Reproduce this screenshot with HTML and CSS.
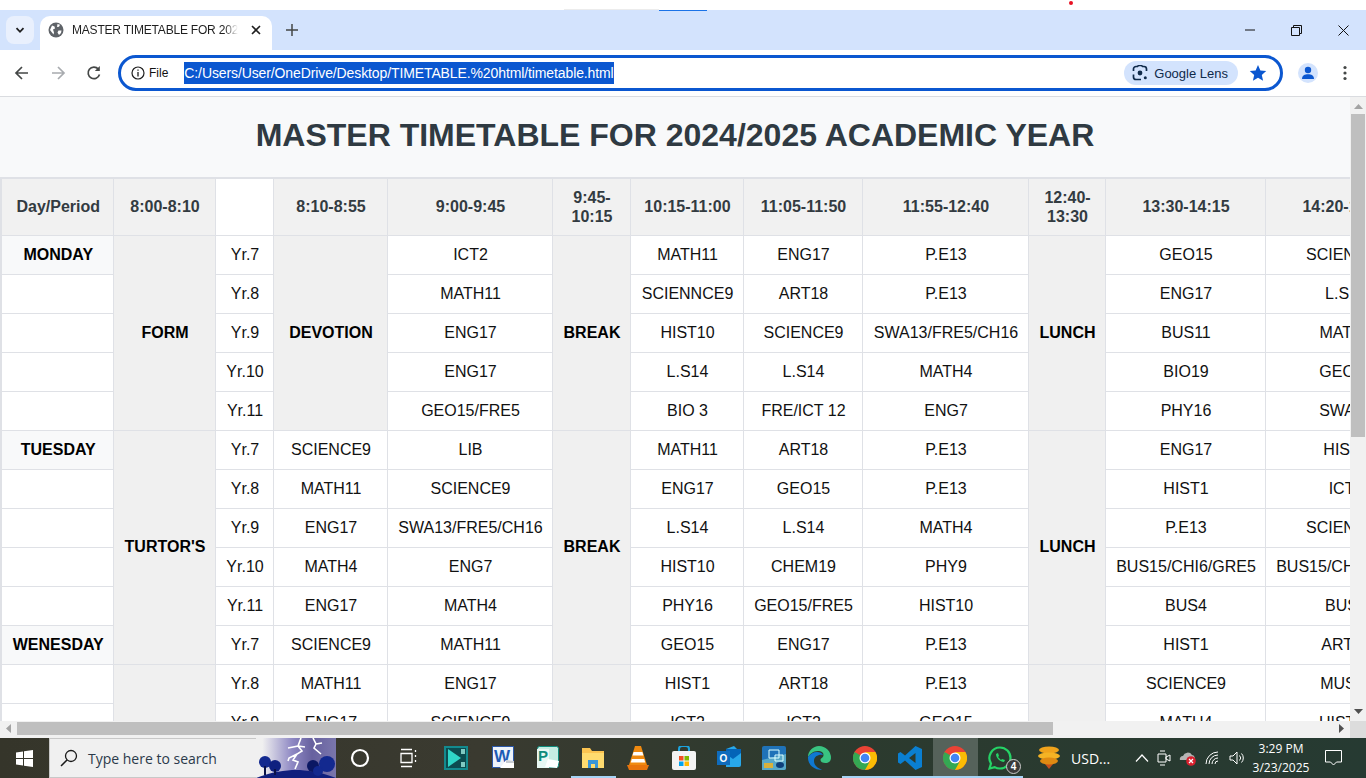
FILE: index.html
```html
<!DOCTYPE html>
<html lang="en">
<head>
<meta charset="utf-8">
<title>MASTER TIMETABLE FOR 2024/2025 ACADEMIC YEAR</title>
<link rel="stylesheet" href="styles.css">
</head>
<body>
<div class="app">
  <div class="topstrip"><span class="strip-grey"></span><span class="strip-blue"></span><span class="strip-dot"></span></div>

  <div class="tabbar">
    <button class="tab-search"><svg width="12" height="12" viewBox="0 0 12 12"><path d="M2.5 4.2 6 7.8l3.5-3.6" fill="none" stroke="#1f1f1f" stroke-width="1.8"/></svg></button>
    <div class="tab">
      <svg class="favicon" width="16" height="16" viewBox="0 0 16 16"><circle cx="8" cy="8" r="7.500" fill="#5f6368"/><path d="M4 3.500 6.500 4.500l.5 2-2 1 1 3-.5 2-3.500-4.500zM9.500 2l2.500.8-1 2-2 .2zM10.500 8.500h3l-.5 2.500-2 2-1.500-2.500z" fill="#fff"/></svg>
      <span class="tab-title">MASTER TIMETABLE FOR 2024/2</span>
      <svg class="tab-close" width="10" height="10" viewBox="0 0 10 10"><path d="M1 1l8 8M9 1l-8 8" stroke="#1f1f1f" stroke-width="1.600"/></svg>
    </div>
    <svg class="newtab" width="12" height="12" viewBox="0 0 12 12"><path d="M6 0v12M0 6h12" stroke="#444746" stroke-width="1.500"/></svg>
    <div class="winctl">
      <svg width="10" height="10" viewBox="0 0 10 10"><path d="M0 5h10" stroke="#111" stroke-width="1"/></svg>
      <svg width="11" height="11" viewBox="0 0 11 11"><path d="M.5 2.500h8v8h-8zM2.500 2.500v-2h8v8h-2" fill="none" stroke="#111"/></svg>
      <svg width="11" height="11" viewBox="0 0 11 11"><path d="M.5.5l10 10M10.500.5l-10 10" stroke="#111"/></svg>
    </div>
  </div>

  <div class="toolbar">
    <svg class="nav" width="16" height="16" viewBox="0 0 16 16"><path d="M14 8H2.500M8 2 2 8l6 6" fill="none" stroke="#444746" stroke-width="1.700"/></svg>
    <svg class="nav" width="16" height="16" viewBox="0 0 16 16"><path d="M2 8h11.500M8 2l6 6-6 6" fill="none" stroke="#a8abaf" stroke-width="1.700"/></svg>
    <svg class="nav" width="16" height="16" viewBox="0 0 16 16"><path d="M13.500 9.500A5.800 5.800 0 1 1 12.300 4" fill="none" stroke="#444746" stroke-width="1.700"/><path d="M13.800 1v5h-5z" fill="#444746"/></svg>
    <div class="omnibox">
      <svg class="info" width="14" height="14" viewBox="0 0 14 14"><circle cx="7" cy="7" r="6" fill="none" stroke="#1f1f1f" stroke-width="1.200"/><path d="M7 6v4.500M7 3.500v1.300" stroke="#1f1f1f" stroke-width="1.300"/></svg>
      <span class="file">File</span>
      <span class="url">C:/Users/User/OneDrive/Desktop/TIMETABLE.%20html/timetable.html</span>
      <span class="lens"><svg width="16" height="16" viewBox="0 0 16 16"><path d="M1.500 6V4a2.500 2.500 0 0 1 2.500-2.500h1.500l1-1h3l1 1H12A2.500 2.500 0 0 1 14.500 4v2M1.500 9.500V12A2.500 2.500 0 0 0 4 14.500h5" fill="none" stroke="#0f2a4a" stroke-width="1.700"/><circle cx="8" cy="8" r="2.400" fill="#0f2a4a"/><circle cx="13.300" cy="12.800" r="1.500" fill="#0f2a4a"/></svg>Google Lens</span>
      <svg class="star" width="18" height="18" viewBox="0 0 18 18"><path d="M9 1l2.400 5.400 5.800.6-4.400 3.900 1.300 5.800L9 13.700l-5.100 3 1.300-5.800L.8 7l5.800-.6z" fill="#0b57d0"/></svg>
    </div>
    <span class="avatar"><svg width="14" height="14" viewBox="0 0 14 14"><circle cx="7" cy="4" r="3.200" fill="#0b57d0"/><path d="M1 13c0-3.500 2.700-4.800 6-4.800s6 1.300 6 4.800z" fill="#0b57d0"/></svg></span>
    <svg class="kebab" width="4" height="16" viewBox="0 0 4 16"><circle cx="2" cy="2.500" r="1.600" fill="#444746"/><circle cx="2" cy="8" r="1.600" fill="#444746"/><circle cx="2" cy="13.500" r="1.600" fill="#444746"/></svg>
  </div>

  <div class="viewport">
    <main class="page">
      <h1 class="title">MASTER TIMETABLE FOR 2024/2025 ACADEMIC YEAR</h1>
      <table class="timetable">
        <colgroup>
          <col class="c112"><col class="c102"><col class="c58"><col class="c114"><col class="c165"><col class="c78"><col class="c113"><col class="c119"><col class="c166"><col class="c77"><col class="c160"><col class="c160">
        </colgroup>
        <thead>
          <tr><th>Day/Period</th><th>8:00-8:10</th><th class="blank"></th><th>8:10-8:55</th><th>9:00-9:45</th><th>9:45-10:15</th><th>10:15-11:00</th><th>11:05-11:50</th><th>11:55-12:40</th><th>12:40-13:30</th><th>13:30-14:15</th><th>14:20-15:05</th></tr>
        </thead>
        <tbody>
          <tr><td class="day">MONDAY</td><td class="span" rowspan="5">FORM</td><td>Yr.7</td><td class="span" rowspan="5">DEVOTION</td><td>ICT2</td><td class="span" rowspan="5">BREAK</td><td>MATH11</td><td>ENG17</td><td>P.E13</td><td class="span" rowspan="5">LUNCH</td><td>GEO15</td><td>SCIENCE9</td></tr>
          <tr><td></td><td>Yr.8</td><td>MATH11</td><td>SCIENNCE9</td><td>ART18</td><td>P.E13</td><td>ENG17</td><td>L.S14</td></tr>
          <tr><td></td><td>Yr.9</td><td>ENG17</td><td>HIST10</td><td>SCIENCE9</td><td>SWA13/FRE5/CH16</td><td>BUS11</td><td>MATH4</td></tr>
          <tr><td></td><td>Yr.10</td><td>ENG17</td><td>L.S14</td><td>L.S14</td><td>MATH4</td><td>BIO19</td><td>GEO15</td></tr>
          <tr><td></td><td>Yr.11</td><td>GEO15/FRE5</td><td>BIO 3</td><td>FRE/ICT 12</td><td>ENG7</td><td>PHY16</td><td>SWA13</td></tr>

          <tr><td class="day">TUESDAY</td><td class="span" rowspan="6">TURTOR'S</td><td>Yr.7</td><td>SCIENCE9</td><td>LIB</td><td class="span" rowspan="6">BREAK</td><td>MATH11</td><td>ART18</td><td>P.E13</td><td class="span" rowspan="6">LUNCH</td><td>ENG17</td><td>HIST1</td></tr>
          <tr><td></td><td>Yr.8</td><td>MATH11</td><td>SCIENCE9</td><td>ENG17</td><td>GEO15</td><td>P.E13</td><td>HIST1</td><td>ICT2</td></tr>
          <tr><td></td><td>Yr.9</td><td>ENG17</td><td>SWA13/FRE5/CH16</td><td>L.S14</td><td>L.S14</td><td>MATH4</td><td>P.E13</td><td>SCIENCE9</td></tr>
          <tr><td></td><td>Yr.10</td><td>MATH4</td><td>ENG7</td><td>HIST10</td><td>CHEM19</td><td>PHY9</td><td>BUS15/CHI6/GRE5</td><td>BUS15/CHI6/GRE5</td></tr>
          <tr><td></td><td>Yr.11</td><td>ENG17</td><td>MATH4</td><td>PHY16</td><td>GEO15/FRE5</td><td>HIST10</td><td>BUS4</td><td>BUS4</td></tr>
          <tr><td class="day">WENESDAY</td><td>Yr.7</td><td>SCIENCE9</td><td>MATH11</td><td>GEO15</td><td>ENG17</td><td>P.E13</td><td>HIST1</td><td>ART18</td></tr>

          <tr><td></td><td class="span" rowspan="2"></td><td>Yr.8</td><td>MATH11</td><td>ENG17</td><td class="span" rowspan="2"></td><td>HIST1</td><td>ART18</td><td>P.E13</td><td class="span" rowspan="2"></td><td>SCIENCE9</td><td>MUSIC</td></tr>
          <tr><td></td><td>Yr.9</td><td>ENG17</td><td>SCIENCE9</td><td>ICT2</td><td>ICT2</td><td>GEO15</td><td>MATH4</td><td>HIST10</td></tr>
        </tbody>
      </table>
    </main>

    <div class="vscroll">
      <svg width="9" height="5" viewBox="0 0 9 5"><path d="M4.500 0 9 5H0z" fill="#a3a3a3"/></svg>
      <span class="vthumb"></span>
      <svg class="vdown" width="9" height="5" viewBox="0 0 9 5"><path d="M4.500 5 9 0H0z" fill="#505050"/></svg>
    </div>
    <div class="hscroll">
      <svg width="5" height="9" viewBox="0 0 5 9"><path d="M0 4.500 5 0v9z" fill="#a3a3a3"/></svg>
      <span class="hthumb"></span>
      <svg class="hright" width="5" height="9" viewBox="0 0 5 9"><path d="M5 4.500 0 0v9z" fill="#505050"/></svg>
    </div>
    <div class="corner"></div>
  </div>

  <footer class="taskbar">
    <div class="start"><svg width="17" height="17" viewBox="0 0 17 17"><path d="M0 2.500 7 1.500v6.500H0zM8 1.300 17 0v8H8zM0 9h7v6.500L0 14.500zM8 9h9v8l-9-1.300z" fill="#fff"/></svg></div>
    <div class="search">
      <svg width="18" height="18" viewBox="0 0 18 18"><circle cx="11" cy="7" r="5.500" fill="none" stroke="#1a1a1a" stroke-width="1.300"/><path d="M7 11l-6 6" stroke="#1a1a1a" stroke-width="1.500"/></svg>
      <span class="search-text">Type here to search</span>
      <svg class="storm" width="80" height="40" viewBox="0 0 80 40"><defs><linearGradient id="sky" x1="0" x2="1" y1="0" y2="0"><stop offset=".08" stop-color="#f0f0f0"/><stop offset=".45" stop-color="#8f89c4"/><stop offset=".7" stop-color="#67619f"/><stop offset="1" stop-color="#7a76ac"/></linearGradient></defs><rect width="80" height="40" fill="url(#sky)"/><path d="M45 0l-3 8-10 2M42 8l4 5-5 3-4 6 5 2-3 7M41 16l-8 4-1 3M42 8l7 1M57 0l3 6-2 4 7 6M60 6l6-1" fill="none" stroke="#fff" stroke-width="1.600"/><path d="M0 40C15 34 30 32 40 32s25 2 40 8z" fill="#0f1f7d"/><circle cx="9" cy="24" r="6" fill="#13298f"/><circle cx="19" cy="28" r="6" fill="#0f2080"/><circle cx="71" cy="26" r="8" fill="#13298f"/><circle cx="57" cy="28" r="6" fill="#0b1763"/><circle cx="62" cy="33" r="5" fill="#13298f"/><path d="M8 28h2v9H8zM18 31h2v6h-2z" fill="#0a1248"/></svg>
    </div>
    <div class="apps">
      <span class="slot wide"><svg width="20" height="20" viewBox="0 0 20 20"><circle cx="10" cy="10" r="8" fill="none" stroke="#fff" stroke-width="2.200"/></svg></span>
      <span class="slot wide"><svg width="20" height="20" viewBox="0 0 20 20"><path d="M3 5.500h11v9H3zM3 1.500h11M3 18.500h11M17.500 2v2M17.500 7v2M17.500 12v2" fill="none" stroke="#fff" stroke-width="1.300"/></svg></span>
      <span class="slot wide"><svg width="24" height="24" viewBox="0 0 24 24"><rect width="24" height="24" fill="#138a8e"/><rect x="2" y="2" width="20" height="20" fill="#0c4c50"/><path d="M4 3l13 9-13 9z" fill="#2fd6c8"/><path d="M17 3h4v5h-4zM17 16h4v5h-4z" fill="#7fc9c2"/></svg></span>
      <span class="slot"><svg width="22" height="24" viewBox="0 0 22 24"><rect x=".5" y=".5" width="21" height="21" fill="#eef3fb" stroke="#2b57a8"/><text x="10" y="16" class="applabel word">W</text><path d="M8 22l6-8 8 1v7z" fill="#fff"/><path d="M14 14l8 1v2h-8z" fill="#c8ccd2"/></svg></span>
      <span class="slot"><svg width="22" height="24" viewBox="0 0 22 24"><rect x=".5" y=".5" width="21" height="21" rx="2" fill="#c4ece2" stroke="#0e8b7c"/><path d="M0 3h12v19H0z" fill="#e8f7f3"/><text x="6" y="15" class="applabel pub">P</text><path d="M8 21l3-8 11 2-2 7z" fill="#fff"/></svg></span>
      <span class="slot on"><svg width="24" height="22" viewBox="0 0 24 22"><path d="M1 1h8l2 3h12v17H1z" fill="#fcc451"/><path d="M1 6h22v15H1z" fill="#ffdb6f"/><path d="M7 13h10v8h-3v-4h-4v4H7z" fill="#3b96d8"/></svg></span>
      <span class="slot"><svg width="22" height="24" viewBox="0 0 22 24"><path d="M8 0h6l6 19H2z" fill="#f08a10"/><path d="M6.600 6h8.800l1 3.500H5.500zM4.800 13h12.400l1 3.500H3.800z" fill="#fff"/><path d="M0 19h22l-2 5H2z" fill="#e8740c"/></svg></span>
      <span class="slot"><svg width="24" height="24" viewBox="0 0 24 24"><path d="M7 6V3a3 3 0 0 1 3-3h4a3 3 0 0 1 3 3v3" fill="none" stroke="#1ca3dd" stroke-width="2"/><rect y="5" width="24" height="19" rx="2" fill="#f4f4f4"/><path d="M7 10h4.500v4.500H7z" fill="#f25022"/><path d="M12.500 10H17v4.500h-4.500z" fill="#7fba00"/><path d="M7 15.500h4.500V20H7z" fill="#00a4ef"/><path d="M12.500 15.500H17V20h-4.500z" fill="#ffb900"/></svg></span>
      <span class="slot"><svg width="24" height="24" viewBox="0 0 24 24"><path d="M9 3l8-3 7 7v12a2 2 0 0 1-2 2H9z" fill="#28a8ea"/><path d="M9 3h15v4l-8 6-7-5z" fill="#0364b8"/><rect y="5" width="13" height="14" fill="#0f6cbd"/><text x="6.500" y="16" class="applabel small">O</text></svg></span>
      <span class="slot"><svg width="24" height="24" viewBox="0 0 24 24"><rect width="24" height="24" rx="2" fill="#1f72b8"/><path d="M0 14l24-6v14a2 2 0 0 1-2 2H0z" fill="#58a8c8"/><path d="M2 17h9v5H2z" fill="#d8b13c"/><path d="M7 4h10v8H7zM13 9h8v6h-8z" fill="none" stroke="#dff" stroke-width="1"/><ellipse cx="18" cy="19" rx="4" ry="3" fill="#0e3f7a"/></svg></span>
      <span class="slot"><svg width="24" height="24" viewBox="0 0 24 24"><path d="M12 0a12 12 0 0 1 12 12c0 3-2.500 5-5.500 5-3 0-5-1-5-3 0-2 3-2 3-5S14 5 11 5C6 5 3 8 1 11 1 5 6 0 12 0z" fill="#39c481"/><path d="M1 11c2-3 5-5 9-5 3 0 5 1 6 3-4-1-9 1-9 6 0 4 3 7 8 8.500A12 12 0 0 1 1 11z" fill="#0f78d1"/></svg></span>
      <span class="slot on"><svg width="24" height="24" viewBox="0 0 24 24"><use href="#chrome"/></svg></span>
      <span class="slot on"><svg width="24" height="24" viewBox="0 0 24 24"><path d="M17.500 0 24 3v18l-6.500 3L7 14.500 2.500 18 0 16.500V7.500L2.500 6 7 9.500zM17.500 7 11 12l6.500 5z" fill="#0a7fd1"/></svg></span>
      <span class="slot on active"><svg width="24" height="24" viewBox="0 0 24 24"><g id="chrome"><circle cx="12" cy="12" r="12" fill="#ea4335"/><path d="M12 12 1.600 6A12 12 0 0 0 12 24l5-6z" fill="#34a853"/><path d="M12 6h10.400A12 12 0 0 1 12 24l5-9z" fill="#fbbc04"/><circle cx="12" cy="12" r="5.500" fill="#fff"/><circle cx="12" cy="12" r="4.300" fill="#4285f4"/></g></svg></span>
      <span class="slot on whats"><svg width="24" height="24" viewBox="0 0 24 24"><path d="M12 1.500a10.500 10.500 0 0 1 0 21c-2 0-3.800-.5-5.300-1.400L1.500 22.500 3 17.500A10.500 10.500 0 0 1 12 1.500z" fill="none" stroke="#25d366" stroke-width="2.200"/><path d="M8 8c0 4 4 8 8 8l1-2-3-1-1 1-3-3 1-1-1-3z" fill="#25d366"/></svg><span class="badge">4</span></span>
    </div>
    <div class="usd">
      <svg width="24" height="24" viewBox="0 0 24 24"><path d="M12 23l-4-5h8z" fill="#c8501c"/><ellipse cx="12" cy="4" rx="10" ry="3.500" fill="#f0a31c"/><ellipse cx="12" cy="10" rx="11" ry="3.500" fill="#f5b324"/><ellipse cx="12" cy="15" rx="9" ry="3.500" fill="#e08a12"/></svg>
      <span>USD...</span>
    </div>
    <div class="tray">
      <svg width="14" height="10" viewBox="0 0 14 10"><path d="M1 8.500l6-6.500 6 6.500" fill="none" stroke="#fff" stroke-width="1.200"/></svg>
      <svg width="14" height="18" viewBox="0 0 14 18"><path d="M1 5h8v8H1zM9 8l4-2v6l-4-2zM3 2h5M3 16h5" fill="none" stroke="#fff"/></svg>
      <svg class="cloud" width="18" height="16" viewBox="0 0 18 16"><path d="M1 10a3 3 0 0 1 3-4 5 5 0 0 1 9-1 3 3 0 0 1 2 5z" fill="#b5b5b5"/><circle cx="12" cy="11" r="4.800" fill="#d9202e"/><path d="M10 9l4 4M14 9l-4 4" stroke="#fff" stroke-width="1.200"/></svg>
      <svg width="16" height="14" viewBox="0 0 16 14"><path d="M1 13A12 12 0 0 1 13 1M4 13a9 9 0 0 1 9-9M7 13a6 6 0 0 1 6-6M10 13a3 3 0 0 1 3-3" fill="none" stroke="#fff" stroke-width="1"/></svg>
      <svg width="16" height="14" viewBox="0 0 16 14"><path d="M1 5h3l4-4v12l-4-4H1zM10.500 4.500a3.500 3.500 0 0 1 0 5M12.500 2.500a6.500 6.500 0 0 1 0 9" fill="none" stroke="#fff"/></svg>
    </div>
    <div class="clock"><span>3:29 PM</span><span>3/23/2025</span></div>
    <div class="notify"><svg width="17" height="16" viewBox="0 0 17 16"><path d="M.5.500h16v11.500h-5L8.500 15l-3-3h-5z" fill="none" stroke="#fff"/></svg></div>
  </footer>
</div>
</body>
</html>
```
FILE: styles.css
```css
* { box-sizing: border-box; }
html, body { margin: 0; padding: 0; height: 100%; overflow: hidden; background: #fff; }
svg { display: block; flex: none; }
.app { width: 1366px; height: 778px; display: flex; flex-direction: column; overflow: hidden; font-family: "Liberation Sans", Arial, sans-serif; }

.topstrip { height: 10px; background: #fff; display: flex; }
.strip-grey { width: 95px; height: 1px; margin: 9px 0 0 564px; background: #ececec; }
.strip-blue { width: 48px; height: 1px; margin-top: 10px; position: relative; z-index: 1; background: #1a73e8; }
.strip-dot { width: 4px; height: 4px; margin: 1px 0 0 362px; border-radius: 50%; background: #e81123; }

.tabbar { height: 40px; background: #d3e3fd; display: flex; align-items: flex-start; padding-left: 6px; }
.tab-search { width: 28px; height: 28px; margin-top: 6px; border: 0; padding: 0; border-radius: 8px; background: #e9f0fd; display: flex; align-items: center; justify-content: center; }
.tab { width: 232px; height: 34px; margin: 6px 0 0 6px; padding: 0 10px 6px 8px; background: #fff; border-radius: 10px 10px 0 0; display: flex; align-items: center; }
.favicon { margin-right: 8px; }
.tab-title { width: 166px; overflow: hidden; white-space: nowrap; font-size: 12px; letter-spacing: -.2px; color: #1f1f1f; -webkit-mask-image: linear-gradient(90deg, #000 92%, transparent); mask-image: linear-gradient(90deg, #000 92%, transparent); }
.tab-close { margin-left: 13px; }
.newtab { margin: 14px 0 0 14px; }
.winctl { margin-left: auto; height: 40px; display: flex; align-items: center; gap: 36px; padding: 0 17px 0 0; }

.toolbar { height: 47px; background: #fff; border-bottom: 1px solid #dadce0; display: flex; align-items: center; padding: 0 0 0 14px; }
.nav { margin-right: 20px; }
.nav:nth-child(3) { margin-right: 16px; }
.omnibox { width: 1165px; height: 36px; border: 3px solid #0b57d0; border-radius: 18px; display: flex; align-items: center; padding: 0 13px 0 10px; }
.file { font-size: 12px; color: #111; margin-left: 4px; }
.url { margin-left: 16px; background: #0b57d0; color: #fff; font-size: 14px; letter-spacing: -.11px; line-height: 22px; height: 22px; white-space: nowrap; }
.lens { margin-left: auto; height: 24px; border-radius: 12px; background: #d3e3fd; padding: 0 10px 0 8px; display: flex; align-items: center; gap: 6px; font-size: 13px; color: #0f2a4a; }
.star { margin-left: 11px; }
.avatar { width: 20px; height: 20px; margin-left: 15px; border-radius: 50%; background: #d3e3fd; display: flex; align-items: center; justify-content: center; }
.kebab { margin-left: 25px; }

.viewport { height: 641px; display: grid; grid-template-columns: 1350px 16px; grid-template-rows: 624px 17px; }
.page { overflow: hidden; background: #f8f9fa; }
.title { height: 80px; margin: 0; font-size: 32px; font-weight: 700; line-height: 76px; text-align: center; color: #2f3a42; white-space: nowrap; }
.timetable { width: 1424px; table-layout: fixed; border-collapse: collapse; border-left: 2px solid #dfe1e6; border-top: 2px solid #dfe1e6; background: #fff; font-size: 16px; color: #111; }
.c112 { width: 112px; } .c102 { width: 102px; } .c58 { width: 58px; } .c114 { width: 114px; } .c165 { width: 165px; } .c78 { width: 78px; } .c113 { width: 113px; } .c119 { width: 119px; } .c166 { width: 166px; } .c77 { width: 77px; } .c160 { width: 160px; }
.timetable th, .timetable td { border: 1px solid #dfe1e6; padding: 0 1px 0 3px; text-align: center; vertical-align: middle; }
.timetable th { height: 57px; background: #f1f1f1; color: #333b41; font-weight: 700; line-height: 19px; }
.timetable th.blank { background: #fff; }
.timetable td { height: 39px; background: #fff; white-space: nowrap; }
.timetable td.day { background: #f8f9fa; color: #000; font-weight: 700; }
.timetable td.span { background: #f0f0f0; color: #000; font-weight: 700; }

.vscroll { background: #f1f1f1; display: flex; flex-direction: column; align-items: center; padding-top: 7px; }
.vthumb { width: 14px; height: 323px; margin-top: 5px; background: #bfbfbf; }
.vdown { margin-top: auto; margin-bottom: 7px; }
.hscroll { background: #f1f1f1; display: flex; align-items: center; padding: 0 6px 2px 6px; }
.hthumb { width: 1036px; height: 13px; margin-left: 6px; background: #bfbfbf; }
.hright { margin-left: auto; }
.corner { background: #dcdcdc; }

.taskbar { height: 40px; background: linear-gradient(90deg, #35352a 0, #3a3a30 35%, #2c3a2e 60%, #263a32 100%); display: flex; align-items: center; color: #fff; }
.start { width: 49px; height: 40px; display: flex; align-items: center; justify-content: center; }
.search { width: 287px; height: 40px; background: #f0f0f0; border: solid #c8c8c8; border-width: 1px 0 1px 1px; display: flex; align-items: center; padding-left: 10px; position: relative; }
.search-text { margin-left: 10px; font-size: 14px; color: #2b3a4a; font-family: "Open Sans", sans-serif; }
.storm { position: absolute; right: 0; top: -1px; }
.apps { display: flex; }
.slot { width: 45.25px; height: 40px; display: flex; align-items: center; justify-content: center; position: relative; }
.slot.wide { width: 48px; }
.slot.on { box-shadow: inset 0 -2px 0 #a5d3f5; }
.slot.active { background: #55625a; }
.applabel { font: 700 13px "Liberation Sans", sans-serif; fill: #fff; text-anchor: middle; }
.applabel.small { font-size: 10px; }
.applabel.word { font-size: 17px; fill: #1e5bb5; }
.applabel.pub { font-size: 15px; fill: #0e8b7c; }
.badge { position: absolute; right: 2px; bottom: 4px; width: 15px; height: 15px; border-radius: 50%; background: #3a3a3a; border: 1px solid #ccc; color: #fff; font-size: 10px; font-weight: 700; line-height: 13px; text-align: center; }
.usd { display: flex; align-items: center; gap: 10px; margin-left: 14px; font-size: 14px; font-family: "Open Sans", sans-serif; }
.tray { display: flex; align-items: center; gap: 8px; margin-left: auto; }
.clock { width: 72px; display: flex; flex-direction: column; align-items: center; font-size: 12px; line-height: 19px; font-family: "Open Sans", sans-serif; }
.notify { width: 49px; display: flex; justify-content: flex-start; padding-left: 8px; }
```
